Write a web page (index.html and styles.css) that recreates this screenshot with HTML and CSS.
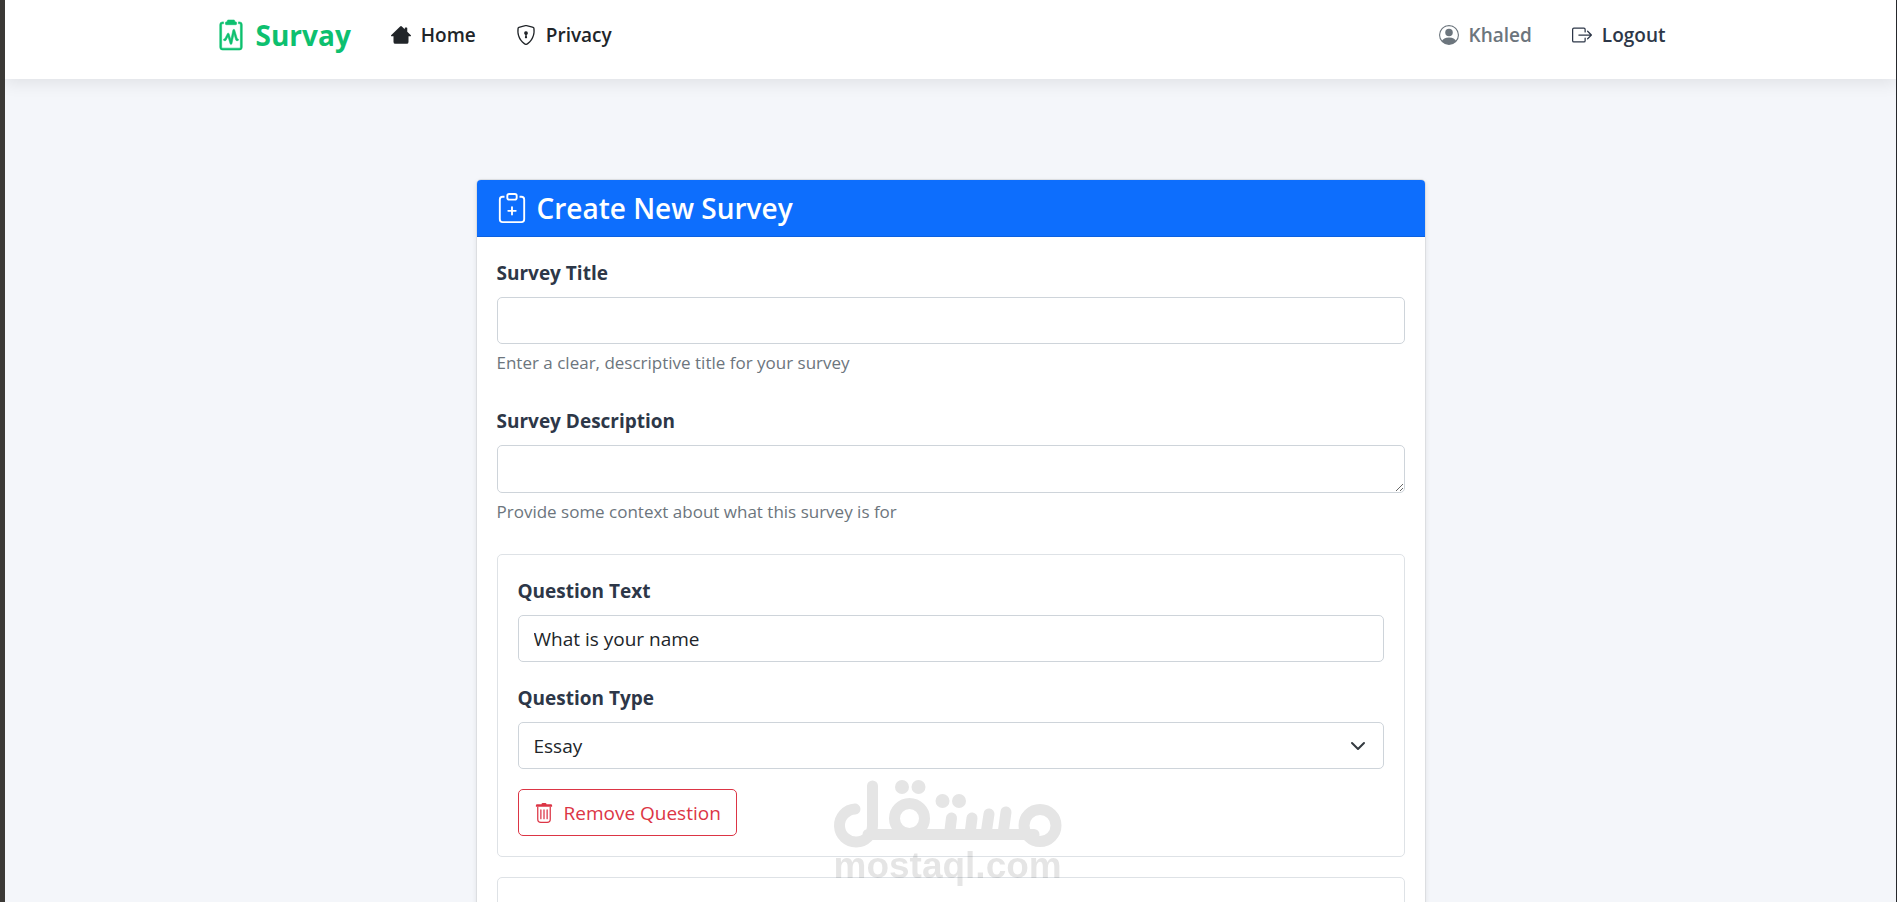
FILE: index.html
```html
<!DOCTYPE html>
<html lang="en">
<head>
<meta charset="UTF-8">
<meta name="viewport" content="width=device-width, initial-scale=1.0">
<title>Create New Survey</title>
<link rel="stylesheet" href="styles.css">
</head>
<body>
<header class="navbar">
    <nav class="container nav-inner">
        <a class="brand" href="#">
            <svg class="brand-icon" viewBox="0 0 16 16" fill="currentColor" aria-hidden="true">
                <path d="M10 .5a.5.5 0 0 0-.5-.5h-3a.5.5 0 0 0-.5.5.5.5 0 0 1-.5.5.5.5 0 0 0-.5.5V2a.5.5 0 0 0 .5.5h5A.5.5 0 0 0 11 2v-.5a.5.5 0 0 0-.5-.5.5.5 0 0 1-.5-.5"/>
                <path d="M4.085 1H3.5A1.5 1.5 0 0 0 2 2.5v12A1.5 1.5 0 0 0 3.5 16h9a1.5 1.5 0 0 0 1.5-1.5v-12A1.5 1.5 0 0 0 12.5 1h-.585q.084.236.085.5V2a.5.5 0 0 1 .5 0 .5.5 0 0 1 .5.5v12a.5.5 0 0 1-.5.5h-9a.5.5 0 0 1-.5-.5v-12a.5.5 0 0 1 .5-.5H4v-.5q.001-.264.085-.5"/>
                <path d="M9.979 5.356a.5.5 0 0 0-.968.04L7.92 10.49l-.94-3.135a.5.5 0 0 0-.926-.08L4.69 10H4.5a.5.5 0 0 0 0 1H5a.5.5 0 0 0 .447-.276l.936-1.873 1.138 3.793a.5.5 0 0 0 .968-.04L9.58 7.51l.94 3.135A.5.5 0 0 0 11 11h.5a.5.5 0 0 0 0-1h-.128z"/>
            </svg>
            <span>Survay</span>
        </a>
        <ul class="nav-list">
            <li><a class="nav-link dark" href="#">
                <svg class="icon" viewBox="0 0 16 16" fill="currentColor" aria-hidden="true">
                    <path d="M7.293 1.2a1 1 0 0 1 1.414 0L11 3.400V2.500a.5.5 0 0 1 .5-.5h1a.5.5 0 0 1 .5.5V5.400l2.900 2.800a.5.5 0 0 1-.4.8H14v4.500a1.500 1.500 0 0 1-1.500 1.500h-9A1.500 1.500 0 0 1 2 13.500V9H.500a.5.5 0 0 1-.4-.8z"/>
                </svg>
                <span>Home</span></a></li>
            <li><a class="nav-link dark" href="#">
                <svg class="icon" viewBox="0 0 16 16" fill="currentColor" aria-hidden="true">
                    <path d="M5.338 1.59a61 61 0 0 0-2.837.856.48.48 0 0 0-.328.39c-.554 4.157.726 7.19 2.253 9.188a10.7 10.7 0 0 0 2.287 2.233c.346.244.652.42.893.533q.18.085.293.118a1 1 0 0 0 .101.025 1 1 0 0 0 .1-.025q.114-.034.294-.118c.24-.113.547-.29.893-.533a10.7 10.7 0 0 0 2.287-2.233c1.527-1.997 2.807-5.031 2.253-9.188a.48.48 0 0 0-.328-.39c-.651-.213-1.75-.56-2.837-.855C9.552 1.29 8.531 1.067 8 1.067c-.53 0-1.552.223-2.662.524zM5.072.56C6.157.265 7.31 0 8 0s1.843.265 2.928.56c1.11.3 2.229.655 2.887.87a1.54 1.54 0 0 1 1.044 1.262c.596 4.477-.787 7.795-2.465 9.99a11.8 11.8 0 0 1-2.517 2.453 7 7 0 0 1-1.048.625c-.28.132-.581.24-.829.24s-.548-.108-.829-.24a7 7 0 0 1-1.048-.625 11.8 11.8 0 0 1-2.517-2.453C1.928 10.487.545 7.169 1.141 2.692A1.54 1.54 0 0 1 2.185 1.43 63 63 0 0 1 5.072.56"/>
                    <path d="M9.5 6.5a1.5 1.5 0 0 1-1 1.415l.385 1.99a.5.5 0 0 1-.491.595h-.788a.5.5 0 0 1-.49-.595l.384-1.99a1.5 1.5 0 1 1 2-1.415"/>
                </svg>
                <span>Privacy</span></a></li>
        </ul>
        <ul class="nav-list">
            <li><a class="nav-link muted" href="#">
                <svg class="icon" viewBox="0 0 16 16" fill="currentColor" aria-hidden="true">
                    <path d="M11 6a3 3 0 1 1-6 0 3 3 0 0 1 6 0"/>
                    <path fill-rule="evenodd" d="M0 8a8 8 0 1 1 16 0A8 8 0 0 1 0 8m8-7a7 7 0 0 0-5.468 11.37C3.242 11.226 4.805 10 8 10s4.757 1.225 5.468 2.37A7 7 0 0 0 8 1"/>
                </svg>
                <span>Khaled</span></a></li>
            <li><a class="nav-link" href="#">
                <svg class="icon" viewBox="0 0 16 16" fill="currentColor" aria-hidden="true">
                    <path fill-rule="evenodd" d="M10 12.5a.5.5 0 0 1-.5.5h-8a.5.5 0 0 1-.5-.5v-9a.5.5 0 0 1 .5-.5h8a.5.5 0 0 1 .5.5v2a.5.5 0 0 0 1 0v-2A1.5 1.5 0 0 0 9.5 2h-8A1.5 1.5 0 0 0 0 3.5v9A1.5 1.5 0 0 0 1.5 14h8a1.5 1.5 0 0 0 1.5-1.5v-2a.5.5 0 0 0-1 0z"/>
                    <path fill-rule="evenodd" d="M15.854 8.354a.5.5 0 0 0 0-.708l-3-3a.5.5 0 0 0-.708.708L14.293 7.5H5.5a.5.5 0 0 0 0 1h8.793l-2.147 2.146a.5.5 0 0 0 .708.708z"/>
                </svg>
                <span>Logout</span></a></li>
        </ul>
    </nav>
</header>

<main class="container main">
    <form class="card">
        <div class="card-header">
            <svg class="title-icon" viewBox="0 0 16 16" fill="currentColor" aria-hidden="true">
                <path fill-rule="evenodd" d="M8 7a.5.5 0 0 1 .5.5V9H10a.5.5 0 0 1 0 1H8.5v1.5a.5.5 0 0 1-1 0V10H6a.5.5 0 0 1 0-1h1.5V7.5A.5.5 0 0 1 8 7"/>
                <path d="M4 1.5H3a2 2 0 0 0-2 2V14a2 2 0 0 0 2 2h10a2 2 0 0 0 2-2V3.5a2 2 0 0 0-2-2h-1v1h1a1 1 0 0 1 1 1V14a1 1 0 0 1-1 1H3a1 1 0 0 1-1-1V3.5a1 1 0 0 1 1-1h1z"/>
                <path d="M9.5 1a.5.5 0 0 1 .5.5v1a.5.5 0 0 1-.5.5h-3a.5.5 0 0 1-.5-.5v-1a.5.5 0 0 1 .5-.5zm-3-1A1.5 1.5 0 0 0 5 1.5v1A1.5 1.5 0 0 0 6.5 4h3A1.5 1.5 0 0 0 11 2.5v-1A1.5 1.5 0 0 0 9.5 0z"/>
            </svg>
            <h1>Create New Survey</h1>
        </div>
        <div class="card-body">
            <div class="field">
                <label for="title">Survey Title</label>
                <input class="control" type="text" id="title">
                <p class="help">Enter a clear, descriptive title for your survey</p>
            </div>
            <div class="field">
                <label for="description">Survey Description</label>
                <textarea class="control" id="description" rows="1"></textarea>
                <p class="help">Provide some context about what this survey is for</p>
            </div>
            <section class="question">
                <div class="field">
                    <label for="text1">Question Text</label>
                    <input class="control" type="text" id="text1" value="What is your name">
                </div>
                <div class="field">
                    <label for="type1">Question Type</label>
                    <div class="select-wrap">
                        <select class="control" id="type1"><option>Essay</option></select>
                        <svg class="chevron" viewBox="0 0 16 16" fill="none" stroke="#343a40" stroke-width="2" stroke-linecap="round" stroke-linejoin="round" aria-hidden="true"><path d="m2 5 6 6 6-6"/></svg>
                    </div>
                </div>
                <button class="btn-remove" type="button">
                    <svg class="trash" viewBox="0 0 16 16" fill="currentColor" aria-hidden="true">
                        <path d="M2.5 1a1 1 0 0 0-1 1v1H14.500V2a1 1 0 0 0-1-1H10a1 1 0 0 0-1-1H7a1 1 0 0 0-1 1z"/>
                        <path d="M2.500 3H3.500V13a2 2 0 0 0 2 2h5a2 2 0 0 0 2-2V3h1v10a3 3 0 0 1-3 3h-5a3 3 0 0 1-3-3z"/>
                        <path d="M5.500 5a.5.5 0 0 0-.5.5v7a.5.5 0 0 0 1 0v-7a.5.5 0 0 0-.5-.5M8 5a.5.5 0 0 0-.5.5v7a.5.5 0 0 0 1 0v-7A.5.5 0 0 0 8 5m2.500 0a.5.5 0 0 0-.5.5v7a.5.5 0 0 0 1 0v-7a.5.5 0 0 0-.5-.5"/>
                    </svg>
                    Remove Question
                </button>
            </section>
            <section class="question"></section>
        </div>
    </form>
</main>

<div class="watermark">
    <svg viewBox="0 0 228 68" fill="none" stroke="currentColor" stroke-width="11" stroke-linecap="round" aria-hidden="true">
        <path d="M21 29a16.500 16.500 0 1 0 17.500 16.500V6M34 54.500H200"/>
        <circle cx="75.500" cy="38.500" r="15"/>
        <circle cx="206" cy="45.500" r="16"/>
        <path d="M115.500 54l2-16M136 54l2-16M152 54l3-20M169 54l3-22"/>
        <g fill="currentColor" stroke="none">
            <circle cx="68" cy="7" r="7"/>
            <circle cx="84.500" cy="7" r="7"/>
            <circle cx="108.500" cy="21" r="7"/>
            <circle cx="125" cy="21" r="7"/>
        </g>
    </svg>
    <span>mostaql.com</span>
</div>
</body>
</html>
```
FILE: styles.css
```css
* {
    box-sizing: border-box;
}
body {
    margin: 0;
    height: 100vh;
    font-family: "Open Sans", "Noto Sans", sans-serif;
    font-size: 19px;
    line-height: 30px;
    color: #212529;
    background-color: #f4f6fa;
    border-left: 5px solid #3b3936;
    border-right: 1px solid #26282c;
    overflow: hidden;
}
.container {
    width: 100%;
    max-width: 1470px;
    margin: 0 auto;
}
.navbar {
    height: 79px;
    background-color: #fff;
    box-shadow: 0 5px 15px rgba(0, 0, 0, 0.08);
}
.nav-inner {
    display: flex;
    align-items: center;
    height: 69px;
}
.brand {
    display: flex;
    align-items: center;
    gap: 10px;
    margin-right: 20px;
    color: #0dc06f;
    font-size: 28px;
    font-weight: 700;
    text-decoration: none;
}
.brand-icon {
    width: 30px;
    height: 30px;
    stroke: currentColor;
    stroke-width: 0.3;
    overflow: visible;
}
.nav-list {
    display: flex;
    margin: 0;
    padding: 0;
    list-style: none;
}
.nav-list:last-child {
    margin-left: auto;
}
.nav-link {
    display: flex;
    align-items: center;
    gap: 10px;
    padding: 0 20px;
    color: #2d3748;
    font-weight: 600;
    text-decoration: none;
}
.nav-link.dark {
    color: #212529;
}
.nav-link.muted {
    color: #6c757d;
}
.icon {
    width: 20px;
    height: 20px;
}
.main {
    padding-top: 100px;
}
.card {
    width: 950px;
    max-width: 100%;
    margin: 0 auto;
    background-color: #fff;
    border: 1px solid #dcdee1;
    border-radius: 5px;
    box-shadow: 0 2px 5px rgba(0, 0, 0, 0.08);
}
.card-header {
    display: flex;
    align-items: center;
    gap: 10px;
    height: 57px;
    padding: 0 20px;
    color: #fff;
    background-color: #0d6efd;
    border-bottom: 1px solid #0c61df;
    border-radius: 4px 4px 0 0;
}
.card-header h1 {
    margin: 0;
    font-size: 28px;
    font-weight: 600;
}
.title-icon {
    width: 30px;
    height: 30px;
}
.card-body {
    padding: 20px;
}
.field {
    margin-bottom: 29px;
}
.field label {
    display: block;
    margin-bottom: 8px;
    color: #2d3748;
    font-weight: 700;
    line-height: 32px;
}
.control {
    display: block;
    width: 100%;
    height: 47px;
    padding: 7px 15px;
    font: inherit;
    color: #212529;
    background-color: #fff;
    border: 1px solid #ced4da;
    border-radius: 5px;
    appearance: none;
}
textarea.control {
    height: 48px;
}
.help {
    margin: 6px 0 0;
    color: #6c757d;
    font-size: 17px;
    line-height: 26px;
}
.question {
    min-height: 120px;
    margin-bottom: 20px;
    padding: 20px;
    border: 1px solid #dee2e6;
    border-radius: 5px;
}
.question .field {
    margin-bottom: 20px;
}
.select-wrap {
    position: relative;
}
.chevron {
    position: absolute;
    top: 16px;
    right: 18px;
    width: 16px;
    height: 16px;
    pointer-events: none;
}
.btn-remove {
    display: flex;
    align-items: center;
    gap: 10px;
    height: 47px;
    padding: 0 15px;
    font: inherit;
    color: #dc3545;
    background-color: transparent;
    border: 1px solid #dc3545;
    border-radius: 5px;
    cursor: pointer;
}
.trash {
    width: 20px;
    height: 20px;
}
.watermark {
    position: fixed;
    bottom: 18px;
    left: 50%;
    width: 228px;
    margin-left: -115px;
    color: #000;
    font-family: "Liberation Sans", Arial, sans-serif;
    font-size: 37px;
    font-weight: 700;
    line-height: 36px;
    text-align: center;
    opacity: 0.1;
    pointer-events: none;
}
.watermark svg {
    display: block;
    width: 100%;
    overflow: visible;
}
```
